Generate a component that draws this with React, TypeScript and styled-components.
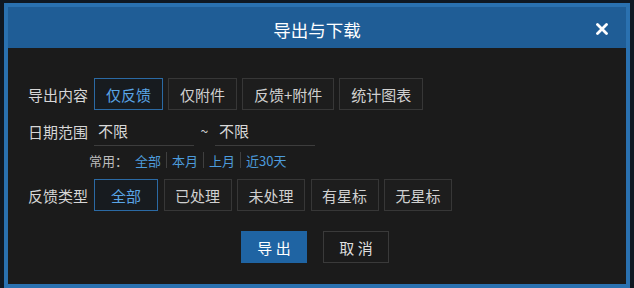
import React, { useState } from "react";
import styled, { createGlobalStyle } from "styled-components";

const GlobalStyle = createGlobalStyle`
    html, body {
        margin: 0;
        padding: 0;
        background: #0f1822;
    }
    body {
        font-family: "Noto Sans CJK SC", "Noto Sans", sans-serif;
    }
`;

const Page = styled.div`
    width: 634px;
    height: 288px;
    padding: 3px 4px 0 4px;
    box-sizing: border-box;
    overflow: hidden;
`;

const Dialog = styled.div`
    width: 626px;
    height: 286px;
    box-sizing: border-box;
    border: 4px solid #2a71b0;
    border-bottom-width: 5px;
    background: #1b1b1b;
    display: flex;
    flex-direction: column;
`;

const Header = styled.div`
    height: 41px;
    box-sizing: border-box;
    padding-top: 4px;
    background: #1f5d96;
    display: flex;
    align-items: center;
    justify-content: center;
    position: relative;
`;

const Title = styled.h2`
    margin: 0;
    font-size: 17.5px;
    font-weight: 400;
    color: #ffffff;
    line-height: 1;
`;

const CloseButton = styled.button`
    position: absolute;
    right: 17px;
    top: 15px;
    width: 14px;
    height: 14px;
    padding: 0;
    border: none;
    background: none;
    cursor: pointer;
    display: flex;
    align-items: center;
    justify-content: center;
`;

const Content = styled.div`
    flex: 1;
    padding: 30px 0 0 20px;
    display: flex;
    flex-direction: column;
`;

const Row = styled.div`
    display: flex;
    align-items: center;
`;

const OptionRow = styled(Row)`
    height: 32px;
`;

const DateRow = styled(Row)`
    height: 30px;
    margin-top: 6px;
`;

const QuickRow = styled(Row)`
    height: 18px;
    margin-top: 5px;
    padding-left: 61px;
    font-size: 13px;
    color: #bdbdbd;
`;

const QuickPrefix = styled.span`
    margin-right: 7px;
`;

const Label = styled.span`
    width: 60px;
    margin-right: 6px;
    font-size: 15px;
    color: #d6d6d6;
    white-space: nowrap;
`;

const Options = styled.div<{ $gap?: number }>`
    display: flex;
    gap: ${(p) => p.$gap ?? 5}px;
`;

const Option = styled.button<{ $active?: boolean; $wide?: boolean }>`
    height: 32px;
    min-width: ${(p) => (p.$wide ? "64px" : "0")};
    padding: 0 ${(p) => (p.$wide ? "10.5px" : "11px")};
    box-sizing: border-box;
    font-family: inherit;
    font-size: 15px;
    border: 1px solid ${(p) => (p.$active ? "#2b6aa4" : "#373737")};
    background: ${(p) => (p.$active ? "#171b1f" : "#1d1d1d")};
    color: ${(p) => (p.$active ? "#5aa5e6" : "#d0d0d0")};
    cursor: pointer;
`;

const DateInput = styled.input`
    width: 100px;
    height: 30px;
    box-sizing: border-box;
    padding: 0 4px;
    border: none;
    border-bottom: 1px solid #3d3d3d;
    background: transparent;
    color: #d8d8d8;
    font-family: inherit;
    font-size: 15px;
    outline: none;
`;

const Tilde = styled.span`
    width: 21px;
    text-align: center;
    color: #cfcfcf;
    font-size: 14px;
`;

const QuickLink = styled.a`
    color: #4d9bdc;
    cursor: pointer;
    text-decoration: none;
`;

const Sep = styled.span`
    width: 1px;
    height: 16px;
    margin: 0 5px;
    background: #3f3f3f;
`;

const TypeRow = styled(OptionRow)`
    margin-top: 10px;
`;

const Footer = styled.div`
    display: flex;
    justify-content: center;
    gap: 16px;
    margin-top: 20px;
    margin-left: -24px;
`;

const ActionButton = styled.button<{ $primary?: boolean }>`
    width: 66px;
    height: 32px;
    box-sizing: border-box;
    font-family: inherit;
    font-size: 15px;
    border: 1px solid ${(p) => (p.$primary ? "#1f64a3" : "#3a3a3a")};
    background: ${(p) => (p.$primary ? "#1f64a3" : "#1b1b1b")};
    color: ${(p) => (p.$primary ? "#ffffff" : "#dedede")};
    cursor: pointer;
    white-space: pre;
`;

const contentOptions = ["仅反馈", "仅附件", "反馈+附件", "统计图表"];
const typeOptions = ["全部", "已处理", "未处理", "有星标", "无星标"];
const quickRanges = ["全部", "本月", "上月", "近30天"];

const App: React.FC = () => {
    const [content, setContent] = useState(0);
    const [type, setType] = useState(0);

    return (
        <Page>
            <GlobalStyle />
            <Dialog>
                <Header>
                    <Title>导出与下载</Title>
                    <CloseButton aria-label="关闭">
                        <svg width="12" height="12" viewBox="0 0 12 12">
                            <path
                                d="M1.5 1.5 L10.5 10.5 M10.5 1.5 L1.5 10.5"
                                stroke="#ffffff"
                                strokeWidth="2.8"
                                strokeLinecap="round"
                            />
                        </svg>
                    </CloseButton>
                </Header>
                <Content>
                    <OptionRow>
                        <Label>导出内容</Label>
                        <Options>
                            {contentOptions.map((o, i) => (
                                <Option
                                    key={o}
                                    $active={i === content}
                                    onClick={() => setContent(i)}
                                >
                                    {o}
                                </Option>
                            ))}
                        </Options>
                    </OptionRow>
                    <DateRow>
                        <Label>日期范围</Label>
                        <DateInput defaultValue="不限" />
                        <Tilde>~</Tilde>
                        <DateInput defaultValue="不限" />
                    </DateRow>
                    <QuickRow>
                        <QuickPrefix>常用：</QuickPrefix>
                        {quickRanges.map((r, i) => (
                            <React.Fragment key={r}>
                                {i > 0 && <Sep />}
                                <QuickLink>{r}</QuickLink>
                            </React.Fragment>
                        ))}
                    </QuickRow>
                    <TypeRow>
                        <Label>反馈类型</Label>
                        <Options $gap={5.5}>
                            {typeOptions.map((o, i) => (
                                <Option
                                    key={o}
                                    $wide
                                    $active={i === type}
                                    onClick={() => setType(i)}
                                >
                                    {o}
                                </Option>
                            ))}
                        </Options>
                    </TypeRow>
                    <Footer>
                        <ActionButton $primary>导 出</ActionButton>
                        <ActionButton>取 消</ActionButton>
                    </Footer>
                </Content>
            </Dialog>
        </Page>
    );
};

export default App;
